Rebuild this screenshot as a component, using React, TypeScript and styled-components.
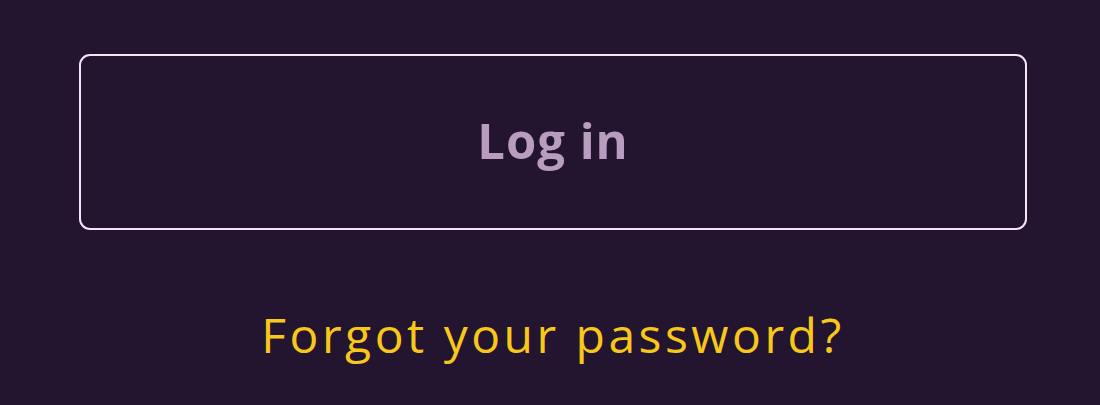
import styled, { createGlobalStyle } from "styled-components";

const GlobalStyle = createGlobalStyle`
html, body {
  margin: 0;
  padding: 0;
  background: #231430;
}
body {
  font-family: "Open Sans", "Noto Sans", sans-serif;
}
`;

const App = () => {
  return (
    <>
      <GlobalStyle />
      <Page>
        <Form>
          <LoginButton type="button">Log in</LoginButton>
          <ForgotLink href="#">Forgot your password?</ForgotLink>
        </Form>
      </Page>
    </>
  );
};
export default App;

const Page = styled.div`
width: 1100px;
height: 405px;
background: #231430;
padding: 54px 0 0 79px;
box-sizing: border-box;
overflow: hidden;
`;

const Form = styled.div`
width: 948px;
display: flex;
flex-direction: column;
align-items: center;
gap: 81px;
`;

const LoginButton = styled.button`
width: 100%;
height: 176px;
background: transparent;
border: 2px solid #f3e4f6;
border-radius: 11px;
color: #b99dc1;
font-family: "Open Sans", "Noto Sans", sans-serif;
font-weight: 700;
font-size: 49px;
letter-spacing: 1px;
padding: 0 0 4px;
cursor: pointer;
`;

const ForgotLink = styled.a`
color: #f7c719;
font-family: "Open Sans", "Noto Sans", sans-serif;
font-weight: 400;
font-size: 48px;
letter-spacing: 3.5px;
text-decoration: none;
line-height: 1;
`;
